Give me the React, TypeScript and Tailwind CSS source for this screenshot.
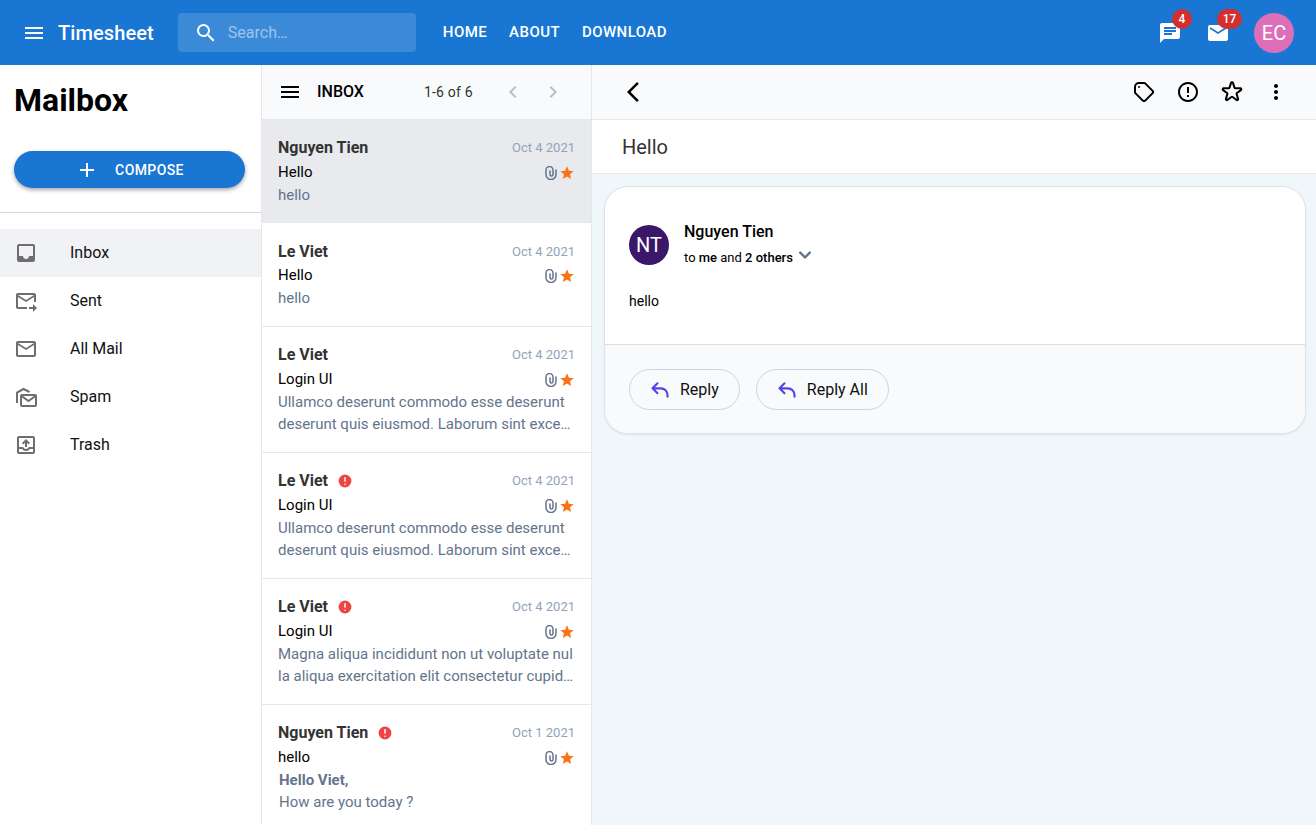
import { MdMenu, MdSearch, MdChat, MdEmail, MdAdd, MdInbox, MdOutlineForwardToInbox, MdMailOutline, MdOutlineOutbox, MdErrorOutline, MdMoreVert, MdStar, MdChevronLeft, MdChevronRight, MdArrowBackIosNew } from "react-icons/md"
import { HiOutlineTag, HiOutlineReply, HiOutlineStar, HiChevronDown, HiExclamationCircle } from "react-icons/hi"

const folders = [
  { label: "Inbox", icon: <MdInbox size={24} />, active: true },
  { label: "Sent", icon: <MdOutlineForwardToInbox size={24} /> },
  { label: "All Mail", icon: <MdMailOutline size={24} /> },
  { label: "Spam", icon: <SpamIcon /> },
  { label: "Trash", icon: <MdOutlineOutbox size={24} /> },
]

const ullamco = "Ullamco deserunt commodo esse deserunt deserunt quis eiusmod. Laborum sint excepteur nostrud aliqua."
const magna = "Magna aliqua incididunt non ut voluptate nulla aliqua exercitation elit consectetur cupidatat nisi."

const mails = [
  { from: "Nguyen Tien", date: "Oct 4 2021", subject: "Hello", preview: "hello", active: true, h: "h-[103px]" },
  { from: "Le Viet", date: "Oct 4 2021", subject: "Hello", preview: "hello", low: true, h: "h-[104px]" },
  { from: "Le Viet", date: "Oct 4 2021", subject: "Login UI", preview: ullamco, h: "h-[126px]" },
  { from: "Le Viet", date: "Oct 4 2021", subject: "Login UI", preview: ullamco, flag: true, h: "h-[126px]" },
  { from: "Le Viet", date: "Oct 4 2021", subject: "Login UI", preview: magna, flag: true, h: "h-[126px]" },
]

function SpamIcon() {
  return (
    <svg width="24" height="24" viewBox="0 0 24 24" fill="none" stroke="currentColor" strokeWidth="2">
      <path d="M3 18V7.500L9.500 4l6 3" />
      <rect x="7" y="10" width="15" height="11" rx="1" />
      <path d="M7.500 11l7 5 7-5" />
    </svg>
  )
}

function ClipIcon() {
  return (
    <svg width="12" height="14" viewBox="0 0 12 14" fill="none" stroke="#64748b" strokeWidth="1.5" strokeLinecap="round" className="mr-[2px]">
      <path d="M11 4v4.500a5 5 0 0 1-10 0V4a3.500 3.500 0 0 1 7 0V8.500a1.500 1.500 0 0 1-3 0V5" />
    </svg>
  )
}

function MailMeta() {
  return (
    <span className="mt-[2px] flex items-center">
      <ClipIcon />
      <MdStar size={16} className="text-[#f97316]" />
    </span>
  )
}

function MailRow({ mail }: { mail: (typeof mails)[number] }) {
  return (
    <div className={`${mail.h} shrink-0 border-b border-[#e5e7eb] px-4 ${mail.low ? "pt-[17px]" : "pt-4"} ${mail.active ? "bg-[#e8eaee] border-[#d8dadf]" : "bg-white"}`}>
      <div className="flex h-6 items-center justify-between">
        <div className="flex items-center gap-[9px] text-base font-bold leading-6 text-[#333]">
          {mail.from}
          {mail.flag && <HiExclamationCircle size={16} className="text-[#ef4444]" />}
        </div>
        <span className="text-[13px] text-[#94a3b8]">{mail.date}</span>
      </div>
      <div className={`flex h-6 items-center justify-between ${mail.low ? "-mt-px" : ""}`}>
        <span className="text-[15px] text-black">{mail.subject}</span>
        <MailMeta />
      </div>
      <p className="line-clamp-2 w-[297px] break-all text-[15px] leading-[22px] text-[#64748b]">{mail.preview}</p>
    </div>
  )
}

export default function App() {
  return (
    <div className="flex h-[825px] flex-col overflow-hidden bg-white font-['Roboto',sans-serif]">
      {/* top bar */}
      <header className="flex h-[65px] shrink-0 items-center bg-[#1976d2] pl-[22px] pr-[22px] text-white">
        <MdMenu size={24} />
        <span className="ml-3 text-xl font-medium tracking-[0.1px]">Timesheet</span>
        <div className="ml-6 flex h-[39px] w-[238px] items-center rounded bg-white/15 pl-4">
          <MdSearch size={24} />
          <span className="ml-[10px] text-base text-white/50">Search…</span>
        </div>
        <nav className="ml-[27px] flex gap-[22px] text-[15px] font-medium tracking-[0.43px]">
          <span>HOME</span>
          <span>ABOUT</span>
          <span>DOWNLOAD</span>
        </nav>
        <div className="ml-auto flex items-center">
          <div className="relative mr-[24px]">
            <MdChat size={24} />
            <span className="absolute -right-[10px] -top-[12px] flex h-5 w-5 items-center justify-center rounded-full bg-[#d32f2f] text-xs font-medium">4</span>
          </div>
          <div className="relative mr-[24px]">
            <MdEmail size={24} />
            <span className="absolute -right-[12px] -top-[12px] flex h-5 w-[25px] items-center justify-center rounded-full bg-[#d32f2f] text-xs font-medium">17</span>
          </div>
          <div className="flex h-10 w-10 items-center justify-center rounded-full bg-[#dd6fb9] text-xl">EC</div>
        </div>
      </header>

      <div className="flex min-h-0 flex-1">
        {/* folders */}
        <aside className="w-[262px] shrink-0 border-r border-[#e5e7eb]">
          <h1 className="ml-[14px] mt-[14px] text-[32px] font-bold leading-[42px] text-black">Mailbox</h1>
          <div className="px-[14px] pb-6 pt-[30px]">
            <button className="flex h-[37px] w-[231px] items-center justify-center rounded-full bg-[#1976d2] text-sm font-medium tracking-[0.4px] text-white shadow-[0_2px_4px_rgba(0,0,0,0.35)]">
              <MdAdd size={24} className="mr-[16px]" />
              COMPOSE
            </button>
          </div>
          <div className="h-px bg-[#d9d9d9]" />
          <ul className="mt-4">
            {folders.map((f) => (
              <li key={f.label} className={`flex h-12 items-center pl-[14px] text-base text-[#111] ${f.active ? "bg-[#f1f2f6]" : ""}`}>
                <span className="w-[56px] text-[#6e6e6e]">{f.icon}</span>
                {f.label}
              </li>
            ))}
          </ul>
        </aside>

        {/* mail list */}
        <section className="flex w-[330px] shrink-0 flex-col overflow-hidden border-r border-[#e5e7eb]">
          <div className="flex h-[55px] shrink-0 items-center border-b border-[#e5e7eb] bg-[#f8fafc] pl-4 text-black">
            <MdMenu size={24} />
            <span className="ml-[15px] text-base font-medium">INBOX</span>
            <span className="ml-[60px] text-sm tracking-[0.2px] text-[#333]">1-6 of 6</span>
            <MdChevronLeft size={24} className="ml-[28px] text-[#bdbdbd]" />
            <MdChevronRight size={24} className="ml-[16px] text-[#bdbdbd]" />
          </div>
          {mails.map((m, i) => (
            <MailRow key={i} mail={m} />
          ))}
          <div className="shrink-0 px-4 pt-4">
            <div className="flex h-6 items-center justify-between">
              <div className="flex items-center gap-[9px] text-base font-bold text-[#333]">
                Nguyen Tien
                <HiExclamationCircle size={16} className="text-[#ef4444]" />
              </div>
              <span className="text-[13px] text-[#94a3b8]">Oct 1 2021</span>
            </div>
            <div className="flex h-6 items-center justify-between">
              <span className="text-[15px] text-black">hello</span>
              <MailMeta />
            </div>
            <p className="pl-px text-[15px] leading-[22px] text-[#64748b]"><b>Hello Viet,</b></p>
            <p className="pl-px text-[15px] leading-[22px] text-[#64748b]">How are you today ?</p>
          </div>
        </section>

        {/* reading pane */}
        <main className="flex min-w-0 flex-1 flex-col bg-[#f0f7fb]">
          <div className="flex h-[55px] shrink-0 items-center border-b border-[#e5e7eb] bg-[#f8fafc] pl-[29px] pr-[28px] text-black">
            <MdArrowBackIosNew size={24} />
            <div className="ml-auto flex items-center gap-5">
              <HiOutlineTag size={24} />
              <MdErrorOutline size={24} />
              <HiOutlineStar size={24} />
              <MdMoreVert size={24} />
            </div>
          </div>
          <div className="flex h-[54px] shrink-0 items-center border-b border-[#e5e7eb] bg-white pl-[30px] text-xl text-[#333]">Hello</div>
          <div className="pl-[12px] pr-[10px] pt-[12px]">
            <div className="overflow-hidden rounded-3xl border border-[#dfe3e8] bg-white shadow-[0_1px_2px_rgba(0,0,0,0.08)]">
              <div className="h-[157px] pl-6 pt-[38px]">
                <div className="flex">
                  <div className="flex h-10 w-10 items-center justify-center rounded-full bg-[#3a1768] text-xl text-white">NT</div>
                  <div className="ml-[15px] -mt-[5px]">
                    <div className="text-base font-medium leading-6 text-black">Nguyen Tien</div>
                    <div className="mt-[2px] flex items-center text-[13px] leading-5 text-black">
                      to&nbsp;<span className="font-medium">me</span>&nbsp;and&nbsp;<span className="font-medium">2 others</span>
                      <HiChevronDown size={24} className="-translate-y-[3px] text-[#64748b]" />
                    </div>
                  </div>
                </div>
                <p className="mt-[19px] text-sm leading-6 text-black">hello</p>
              </div>
              <div className="flex h-[89px] gap-4 border-t border-[#dadde2] bg-[#f8fafc] pl-6 pt-6">
                <button className="flex h-[41px] items-center rounded-full border border-[#cbd5e1] px-[20px] text-base text-[#111]">
                  <HiOutlineReply size={20} strokeWidth={2.5} className="mr-[10px] text-[#4f46e5]" />
                  Reply
                </button>
                <button className="flex h-[41px] items-center rounded-full border border-[#cbd5e1] px-[20px] text-base text-[#111]">
                  <HiOutlineReply size={20} strokeWidth={2.5} className="mr-[10px] text-[#4f46e5]" />
                  Reply All
                </button>
              </div>
            </div>
          </div>
        </main>
      </div>
    </div>
  )
}
